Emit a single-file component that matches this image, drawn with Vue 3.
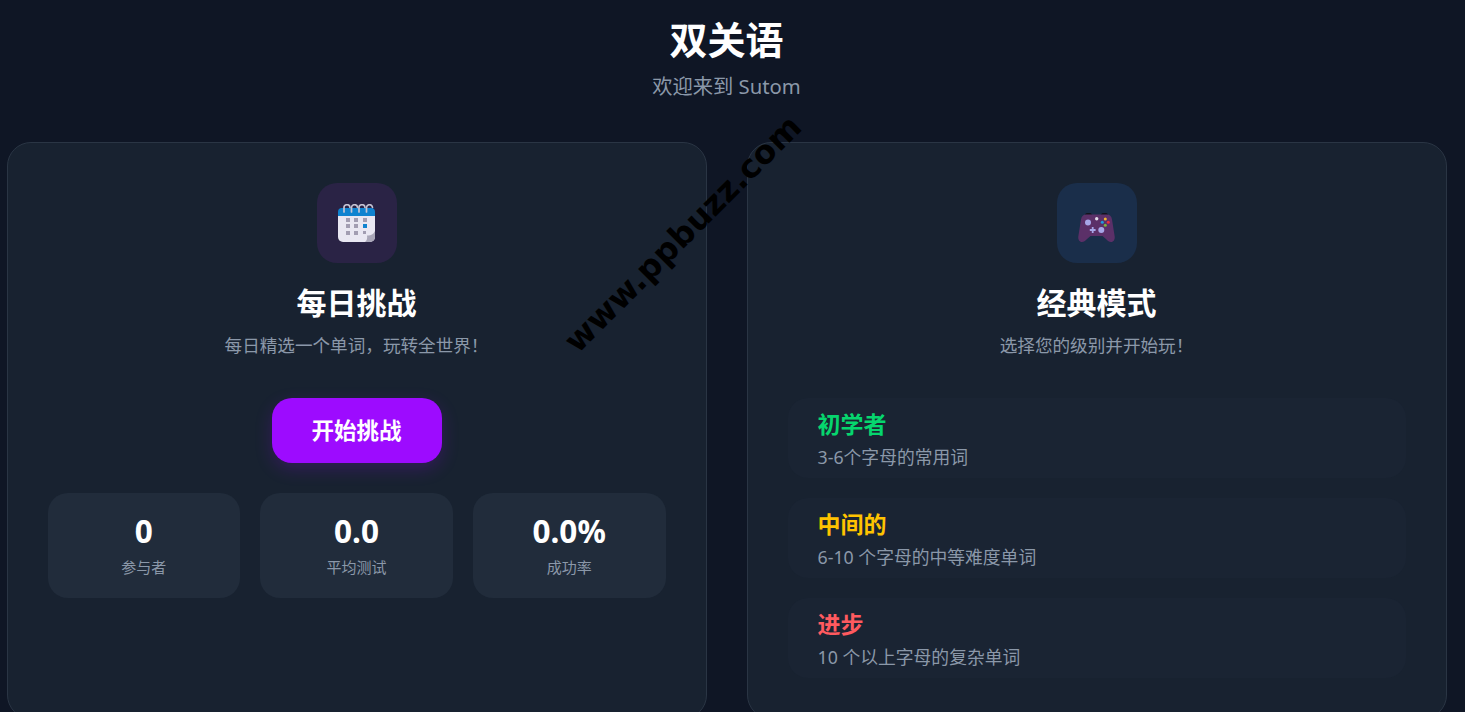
<script setup>
const stats = [
  { value: '0', label: '参与者' },
  { value: '0.0', label: '平均测试' },
  { value: '0.0%', label: '成功率' },
]

const levels = [
  { name: '初学者', desc: '3-6个字母的常用词', color: '#06d66e' },
  { name: '中间的', desc: '6-10 个字母的中等难度单词', color: '#ffc300' },
  { name: '进步', desc: '10 个以上字母的复杂单词', color: '#ff5a5f' },
]
</script>

<template>
  <div class="page">
    <header class="header">
      <h1>双关语</h1>
      <p>欢迎来到 Sutom</p>
    </header>

    <main class="cards">
      <section class="card">
        <div class="icon icon-purple">
          <svg width="38" height="38" viewBox="0 0 38 38">
            <path d="M0 12h37v21a5 5 0 0 1-5 5H5a5 5 0 0 1-5-5z" fill="#e9e7f2" />
            <path d="M0 12V8a4 4 0 0 1 4-4h29a4 4 0 0 1 4 4v4z" fill="#0f83d0" />
            <path d="M37 27v6a5 5 0 0 1-5 5h-5c2-1.500 2.500-4 2-6.500 3 .5 6-.5 8-4.500z" fill="#aaa7b9" />
            <g fill="none" stroke="#c5c3d3" stroke-width="1.700" stroke-linecap="round">
              <path d="M6 8V4a3 3 0 0 1 6-.5" />
              <path d="M13.500 8V4a3 3 0 0 1 6-.5" />
              <path d="M21 8V4a3 3 0 0 1 6-.5" />
              <path d="M28.500 8V4a3 3 0 0 1 6-.5" />
            </g>
            <g fill="#a29db2">
              <rect x="8" y="14" width="4" height="4" />
              <rect x="16" y="14" width="4" height="4" />
              <rect x="25" y="14" width="4" height="4" />
              <rect x="8" y="20" width="4" height="4" />
              <rect x="16" y="20" width="4" height="4" />
              <rect x="8" y="27" width="4" height="4" />
              <rect x="16" y="27" width="4" height="4" />
              <rect x="25" y="27" width="3" height="3" />
            </g>
            <rect x="25" y="20" width="4" height="4" fill="#0f83d0" />
          </svg>
        </div>
        <h2>每日挑战</h2>
        <p class="desc">每日精选一个单词，玩转全世界！</p>
        <button class="start">开始挑战</button>
        <div class="stats">
          <div v-for="s in stats" :key="s.label" class="stat">
            <div class="num">{{ s.value }}</div>
            <div class="label">{{ s.label }}</div>
          </div>
        </div>
      </section>

      <section class="card">
        <div class="icon icon-blue">
          <svg width="38" height="38" viewBox="0 0 38 38">
            <g transform="translate(0 9)">
              <path d="M7 2.500C7 .5 8 0 10.500 0S14 .5 14 2.500zM23 2.500C23 .5 24 0 26.500 0S30 .5 30 2.500z" fill="#14131c" />
              <path d="M8 1.500h21c2.500 0 4.500 1.500 5 5l2.700 17c.3 3-1 5.500-3.700 5.500-2 0-3.200-1.200-4.500-2.500L24.500 23h-12l-4 3.500C7 27.800 6 29 4 29c-2.700 0-4-2.500-3.700-5.500L3 6.500c.5-3.500 2.500-5 5-5z" fill="#5b3068" />
              <circle cx="10" cy="9.500" r="3" fill="#a7a6e8" />
              <circle cx="23.300" cy="17" r="3" fill="#a7a6e8" />
              <path d="M11.800 17h5.800M14.700 14v6" stroke="#a7a6e8" stroke-width="1.800" />
              <circle cx="18.700" cy="5.700" r="1.700" fill="#e2dbe8" />
              <circle cx="27.300" cy="6" r="1.500" fill="#f2b632" />
              <circle cx="24.300" cy="9.300" r="1.500" fill="#1f9be0" />
              <circle cx="30.300" cy="9.300" r="1.500" fill="#ec2f3c" />
              <circle cx="27.300" cy="12.300" r="1.500" fill="#7db13c" />
            </g>
          </svg>
        </div>
        <h2>经典模式</h2>
        <p class="desc">选择您的级别并开始玩！</p>
        <div class="levels">
          <div v-for="l in levels" :key="l.name" class="level">
            <h3 :style="{ color: l.color }">{{ l.name }}</h3>
            <p>{{ l.desc }}</p>
          </div>
        </div>
      </section>
    </main>

    <div class="watermark">www.ppbuzz.com</div>
  </div>
</template>

<style>
html, body {
  margin: 0;
  height: 712px;
  overflow: hidden;
  background: #0f1625;
}
</style>

<style scoped>
.page {
  position: relative;
  width: 1453px;
  height: 712px;
  overflow: hidden;
  box-sizing: border-box;
  padding-top: 14px;
  font-family: "Noto Sans", "Noto Sans CJK SC", sans-serif;
  color: #fff;
}

.header {
  text-align: center;
  height: 128px;
}

.header h1 {
  margin: 0;
  font-size: 38px;
  line-height: 50px;
  font-weight: 700;
}

.header p {
  margin: 5px 0 0;
  font-size: 20.300px;
  line-height: 34px;
  color: #8b98a9;
}

.cards {
  display: flex;
  justify-content: center;
  gap: 40px;
}

.card {
  width: 700px;
  box-sizing: border-box;
  padding: 40px;
  background: #182230;
  border: 1px solid #2a3544;
  border-radius: 24px;
  display: flex;
  flex-direction: column;
  align-items: center;
  flex-shrink: 0;
}

.icon {
  width: 80px;
  height: 80px;
  border-radius: 20px;
  display: flex;
  align-items: center;
  justify-content: center;
}

.icon-purple {
  background: #2a2345;
}

.icon-blue {
  background: #1a2e4a;
}

h2 {
  margin: 20px 0 0;
  font-size: 30px;
  line-height: 40px;
  font-weight: 700;
}

.desc {
  margin: 10px 0 0;
  font-size: 17.600px;
  line-height: 24px;
  color: #8b98a9;
}

.start {
  margin-top: 41px;
  width: 170px;
  height: 65px;
  padding: 0 0 3px;
  border: none;
  border-radius: 20px;
  background: #9d0bff;
  color: #fff;
  font-family: inherit;
  font-size: 22.500px;
  font-weight: 700;
  box-shadow: 0 6px 18px rgba(157, 11, 255, 0.2);
}

.stats {
  margin-top: 30px;
  width: 100%;
  display: grid;
  grid-template-columns: repeat(3, 1fr);
  gap: 20px;
}

.stat {
  height: 105px;
  box-sizing: border-box;
  padding-top: 19px;
  background: #212c3b;
  border-radius: 20px;
  text-align: center;
}

.num {
  font-size: 31.500px;
  line-height: 38px;
  font-weight: 700;
}

.label {
  margin-top: 7px;
  font-size: 15px;
  line-height: 20px;
  color: #8b98a9;
}

.levels {
  margin-top: 41px;
  width: 100%;
  display: flex;
  flex-direction: column;
  gap: 20px;
}

.level {
  height: 80px;
  box-sizing: border-box;
  padding: 10px 30px;
  background: #1a2433;
  border-radius: 20px;
}

.level h3 {
  margin: 0;
  font-size: 23px;
  line-height: 32px;
  font-weight: 700;
}

.level p {
  margin: 4px 0 0;
  font-size: 17.800px;
  line-height: 26px;
  color: #8b98a9;
}

.watermark {
  position: absolute;
  left: 683px;
  top: 234px;
  transform: translate(-50%, -50%) rotate(-45deg);
  font-family: "DejaVu Sans", sans-serif;
  font-size: 32.500px;
  font-weight: 700;
  line-height: 1;
  color: #000;
  white-space: nowrap;
}
</style>
